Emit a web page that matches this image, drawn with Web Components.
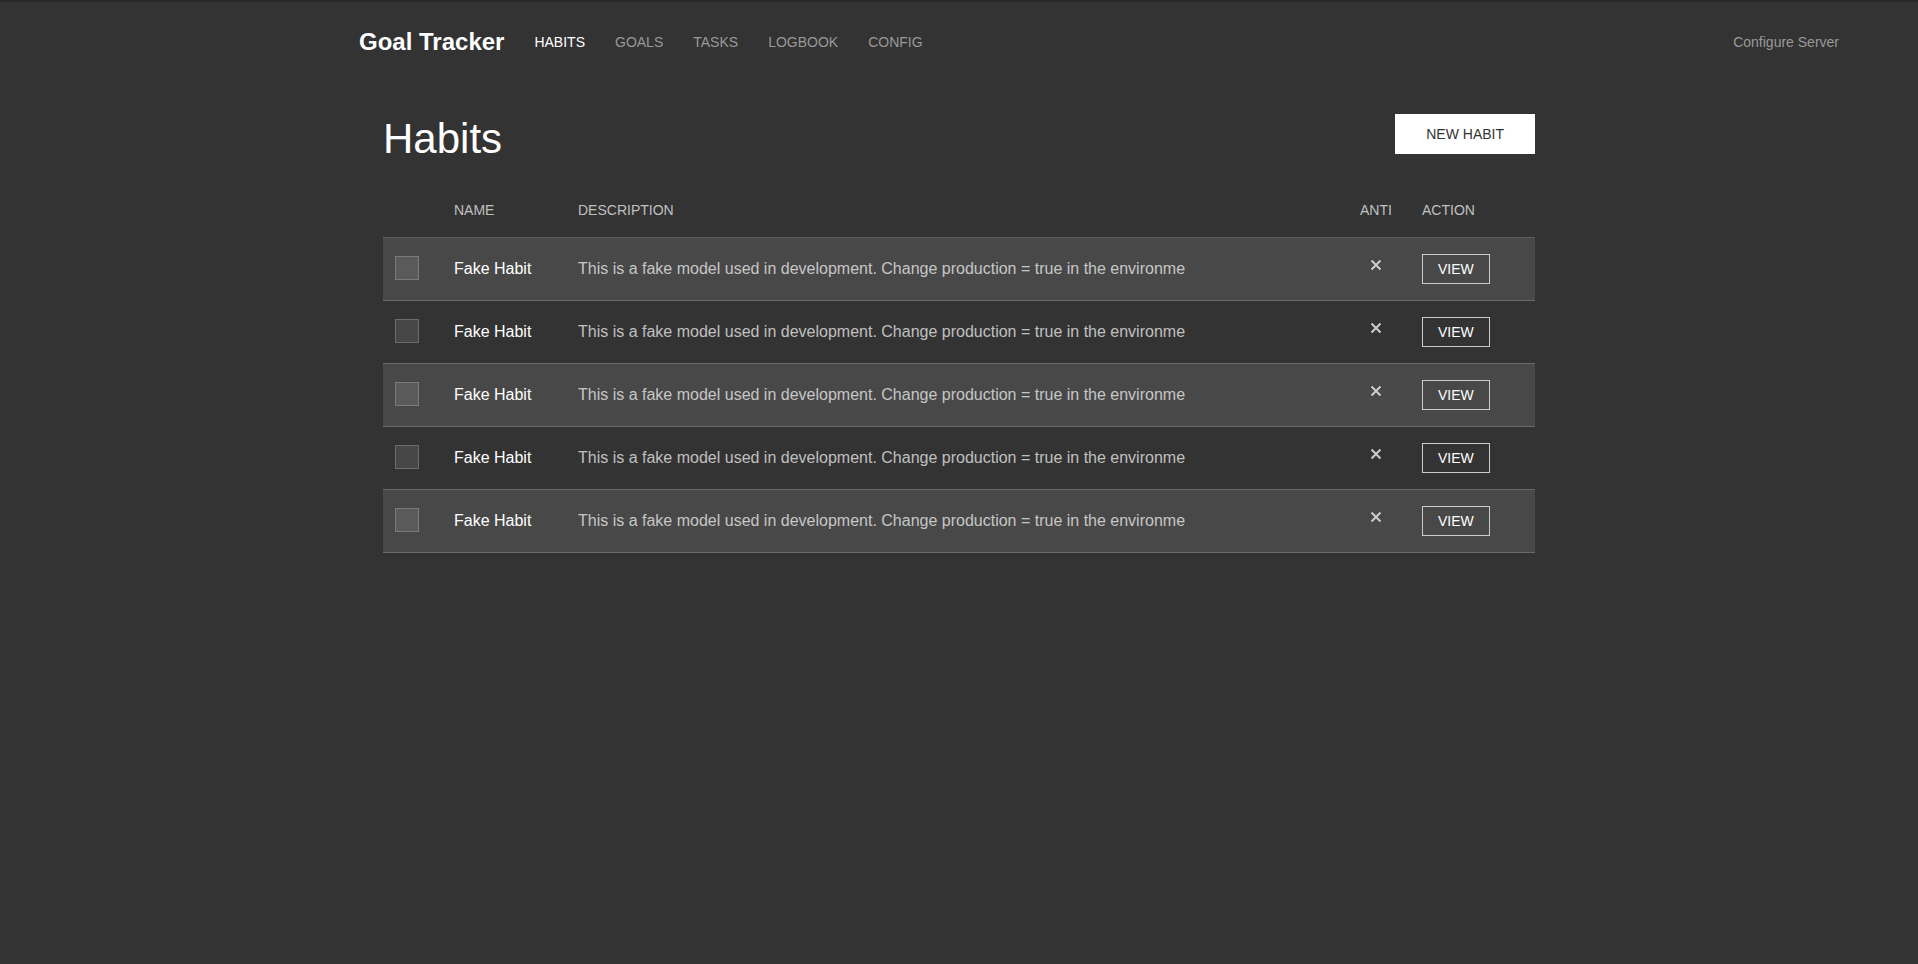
<!DOCTYPE html>
<html lang="en">
<head>
<meta charset="utf-8">
<meta name="viewport" content="width=device-width, initial-scale=1">
<title>Goal Tracker</title>
<style>
body{
    margin: 0;
    min-height: 100vh;
    box-sizing: border-box;
    border-top: 2px solid #282a2a;
    background: #333333;
    color: rgba(255, 255, 255, 0.7);
    font-family: "Liberation Sans", Arial, sans-serif;
    font-size: 16px;
    line-height: 24px;
}
</style>
</head>
<body>
<nav-bar>
    <nav-item href="#habits" active>Habits</nav-item>
    <nav-item href="#goals">Goals</nav-item>
    <nav-item href="#tasks">Tasks</nav-item>
    <nav-item href="#logbook">Logbook</nav-item>
    <nav-item href="#config">Config</nav-item>
    <a slot="right" href="#server">Configure Server</a>
</nav-bar>
<habits-page></habits-page>

<template id="navBarTemplate">
<style>
:host{
    display: block;
}

nav{
    display: flex;
    align-items: center;
    gap: 30px;
    height: 80px;
    padding-left: max(15px, calc(50% - 600px));
    padding-right: 79px;
}

#logo{
    color: #ffffff;
    font-size: 24px;
    font-weight: bold;
    text-decoration: none;
    white-space: nowrap;
}

#items{
    display: flex;
    gap: 30px;
}

#right{
    margin-left: auto;
    white-space: nowrap;
}

::slotted(a){
    color: #999999;
    font-size: 14px;
    text-decoration: none;
}
</style>

<nav>
    <a id="logo" href="#">Goal Tracker</a>
    <div id="items"><slot></slot></div>
    <div id="right"><slot name="right"></slot></div>
</nav>
</template>

<template id="navItemTemplate">
<style>
:host{
    display: block;
    font-size: 14px;
    text-transform: uppercase;
}

a{
    color: #999999;
    text-decoration: none;
}

:host([active]) a, a:hover{
    color: #ffffff;
}
</style>

<a><slot></slot></a>
</template>

<template id="uiButtonTemplate">
<style>
:host{
    display: inline-block;
    vertical-align: middle;
}

button{
    display: block;
    box-sizing: border-box;
    margin: 0;
    padding: 0 30px;
    border: 1px solid #ffffff;
    background: #ffffff;
    color: #333333;
    font-family: inherit;
    font-size: 14px;
    line-height: 38px;
    text-transform: uppercase;
    white-space: nowrap;
    cursor: pointer;
}

:host([small]) button{
    padding: 0 15px;
    border-color: #cccccc;
    background: transparent;
    color: #ffffff;
    line-height: 28px;
}
</style>

<button type="button"><slot></slot></button>
</template>

<template id="habitsPageTemplate">
<style>
:host{
    display: block;
    box-sizing: border-box;
    max-width: 1152px;
    margin: 0 auto;
    padding-top: 32px;
}

header{
    display: flex;
    align-items: flex-start;
    justify-content: space-between;
}

h1{
    margin: 0;
    color: #ffffff;
    font-size: 42px;
    font-weight: normal;
    line-height: 50px;
}
</style>

<header>
    <h1>Habits</h1>
    <ui-button>New Habit</ui-button>
</header>
<habit-table></habit-table>
</template>

<template id="habitTableTemplate">
<style>
:host{
    display: block;
    margin-top: 20px;
}

table{
    width: 100%;
    border-collapse: collapse;
    table-layout: fixed;
}

.check{
    width: 59px;
}

.name{
    width: 124px;
}

.anti{
    width: 62px;
}

.action{
    width: 125px;
}

th{
    box-sizing: border-box;
    height: 53px;
    padding: 0 12px;
    font-size: 14px;
    font-weight: normal;
    text-align: left;
    text-transform: uppercase;
}

td{
    box-sizing: border-box;
    height: 63px;
    padding: 0 12px;
    vertical-align: middle;
}

tbody tr{
    border-top: 1px solid #5c5c5c;
    border-bottom: 1px solid #6a6a6a;
}

tbody tr:nth-child(odd){
    background: #484848;
}

td.name{
    color: #ffffff;
}

td.description{
    overflow: hidden;
    white-space: nowrap;
}

td.anti{
    padding-bottom: 8px;
}

input{
    display: block;
    appearance: none;
    box-sizing: border-box;
    width: 24px;
    height: 24px;
    margin: 0 0 2px;
    border: 1px solid rgba(255, 255, 255, 0.2);
    background: rgba(255, 255, 255, 0.1);
}

input:checked{
    background: #ffffff;
}

svg{
    display: block;
    margin: 0 9px;
}
</style>

<table>
    <thead>
        <tr>
            <th class="check"></th>
            <th class="name">Name</th>
            <th class="description">Description</th>
            <th class="anti">Anti</th>
            <th class="action">Action</th>
        </tr>
    </thead>
    <tbody></tbody>
</table>
</template>

<template id="habitRowTemplate">
    <tr>
        <td class="check"><input type="checkbox"></td>
        <td class="name"></td>
        <td class="description"></td>
        <td class="anti">
            <svg width="14" height="14" viewBox="0 0 14 14" fill="none" stroke="#cccccc" stroke-width="2" aria-hidden="true"><path d="M2.5 2.5L11.5 11.5M11.5 2.5L2.5 11.5"/></svg>
        </td>
        <td class="action"><ui-button small>View</ui-button></td>
    </tr>
</template>

<script>
const fakeHabit = {
    name: 'Fake Habit',
    description: 'This is a fake model used in development. Change production = true in the environme'
};
const habits = Array(5).fill(fakeHabit);

function getTemplate(id){
    return document.getElementById(id).content.cloneNode(true);
}

class UiButton extends HTMLElement {
    constructor() {
        super();
        this.attachShadow({mode: 'open'});
        this.shadowRoot.appendChild(getTemplate('uiButtonTemplate'));
    }
}

class NavItem extends HTMLElement {
    constructor() {
        super();
        this.attachShadow({mode: 'open'});
        this.shadowRoot.appendChild(getTemplate('navItemTemplate'));
    }

    connectedCallback() {
        this.shadowRoot.querySelector('a').href = this.getAttribute('href');
    }
}

class NavBar extends HTMLElement {
    constructor() {
        super();
        this.attachShadow({mode: 'open'});
        this.shadowRoot.appendChild(getTemplate('navBarTemplate'));
    }
}

class HabitTable extends HTMLElement {
    constructor() {
        super();
        this.attachShadow({mode: 'open'});
        this.shadowRoot.appendChild(getTemplate('habitTableTemplate'));
    }

    connectedCallback() {
        const body = this.shadowRoot.querySelector('tbody');
        body.replaceChildren();
        habits.forEach((habit, i) => {
            const row = getTemplate('habitRowTemplate');
            const name = row.querySelector('.name');
            name.id = 'habit' + i;
            name.textContent = habit.name;
            row.querySelector('input').setAttribute('aria-labelledby', name.id);
            row.querySelector('.description').textContent = habit.description;
            body.appendChild(row);
        });
    }
}

class HabitsPage extends HTMLElement {
    constructor() {
        super();
        this.attachShadow({mode: 'open'});
        this.shadowRoot.appendChild(getTemplate('habitsPageTemplate'));
    }
}

window.customElements.define('ui-button', UiButton);
window.customElements.define('nav-item', NavItem);
window.customElements.define('nav-bar', NavBar);
window.customElements.define('habit-table', HabitTable);
window.customElements.define('habits-page', HabitsPage);
</script>
</body>
</html>
